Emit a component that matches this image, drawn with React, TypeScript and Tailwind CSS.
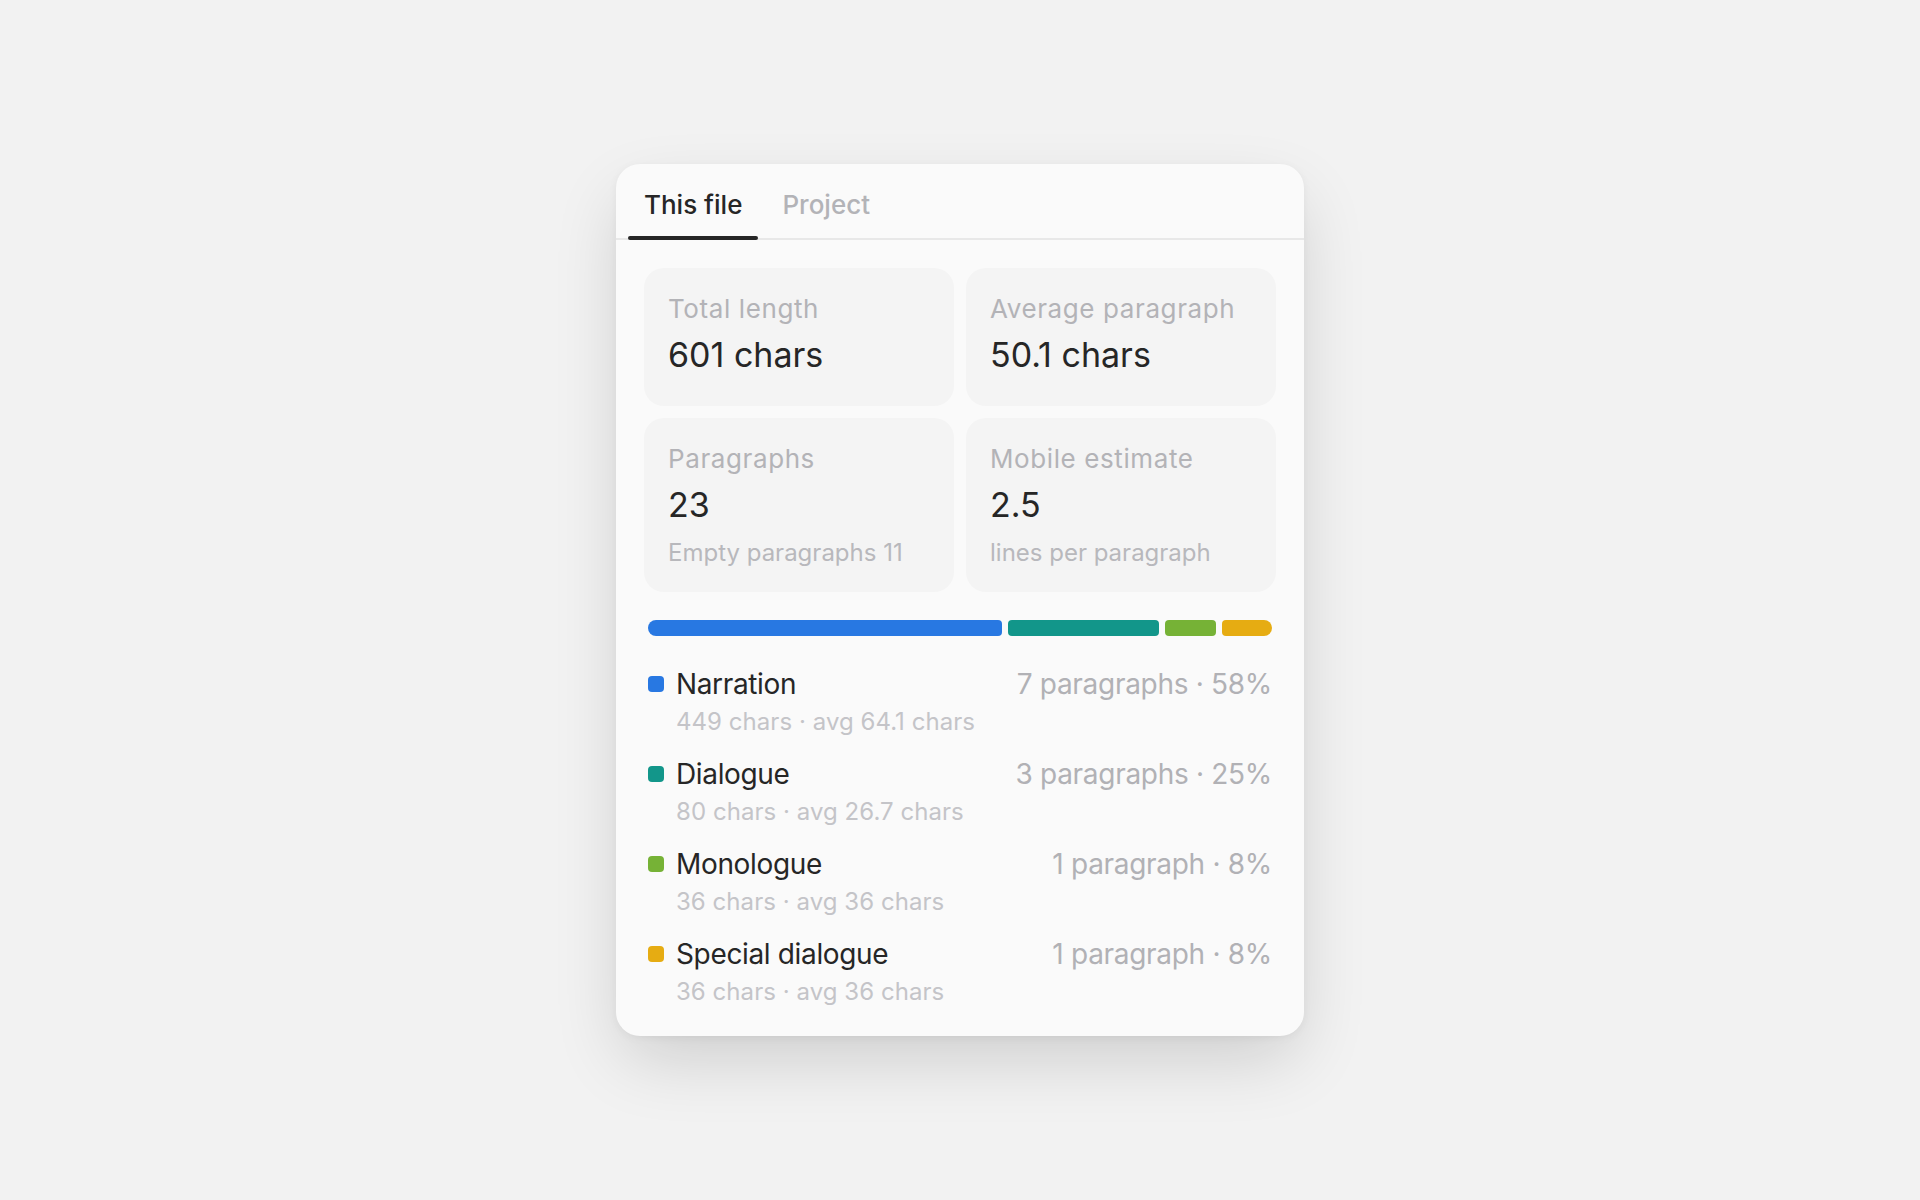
import React from "react";

const font = { fontFamily: "Inter, 'Noto Sans', 'Liberation Sans', sans-serif" };

type Stat = { label: string; value: string; sub?: string };

const stats: Stat[] = [
  { label: "Total length", value: "601 chars" },
  { label: "Average paragraph", value: "50.1 chars" },
  { label: "Paragraphs", value: "23", sub: "Empty paragraphs 11" },
  { label: "Mobile estimate", value: "2.5", sub: "lines per paragraph" },
];

type Seg = { name: string; color: string; grow: number; right: string; sub: string };

const segs: Seg[] = [
  { name: "Narration", color: "bg-[#2878e2]", grow: 7, right: "7 paragraphs · 58%", sub: "449 chars · avg 64.1 chars" },
  { name: "Dialogue", color: "bg-[#12968a]", grow: 3, right: "3 paragraphs · 25%", sub: "80 chars · avg 26.7 chars" },
  { name: "Monologue", color: "bg-[#76b236]", grow: 1, right: "1 paragraph · 8%", sub: "36 chars · avg 36 chars" },
  { name: "Special dialogue", color: "bg-[#e6ac12]", grow: 1, right: "1 paragraph · 8%", sub: "36 chars · avg 36 chars" },
];

function StatCard({ s }: { s: Stat }) {
  return (
    <div
      className={
        "flex flex-col rounded-[20px] bg-[#f4f4f4] px-6 pt-6 " + (s.sub ? "pb-[24px]" : "pb-[30px]")
      }
    >
      <div className="text-[26px] leading-[34px] tracking-[0.6px] text-[#b3b3b7]">{s.label}</div>
      <div className="mt-2 text-[34px] leading-[42px] text-[#262626]">{s.value}</div>
      {s.sub && <div className="mt-3 text-[24px] leading-[30px] text-[#b8b8bc]">{s.sub}</div>}
    </div>
  );
}

export default function App() {
  return (
    <div className="flex min-h-screen w-full items-center justify-center bg-[#f2f2f2]" style={font}>
      <div className="w-[688px] overflow-hidden rounded-[24px] bg-[#fafafa] shadow-[0_28px_70px_-8px_rgba(0,0,0,0.16),0_2px_8px_rgba(0,0,0,0.05)]">
        <div className="flex gap-2 border-b-2 border-[#e8e8e8] px-3 pt-6">
          <div className="relative px-4 pb-4">
            <span className="text-[26px] font-medium leading-[34px] text-[#262626]">This file</span>
            <div className="absolute -bottom-[2px] left-0 right-0 h-1 rounded-full bg-[#262626]" />
          </div>
          <div className="relative px-4 pb-4">
            <span className="text-[26px] font-medium leading-[34px] text-[#b3b3b7]">Project</span>
          </div>
        </div>

        <div className="px-7 pb-[30px] pt-7">
          <div className="grid grid-cols-2 gap-3">
            {stats.map((s) => (
              <StatCard key={s.label} s={s} />
            ))}
          </div>

          <div className="px-1">
            <div className="mt-7 flex h-4 gap-[6px] overflow-hidden rounded-full">
              {segs.map((g) => (
                <div
                  key={g.name}
                  className={"h-full rounded-[4px] " + g.color}
                  style={{ flexGrow: g.grow, flexBasis: 0 }}
                />
              ))}
            </div>

            <div className="mt-[30px] flex flex-col gap-5">
              {segs.map((g) => (
                <div key={g.name} className="flex items-start gap-3">
                  <div className={"mt-[10px] h-4 w-4 shrink-0 rounded-[4px] " + g.color} />
                  <div className="flex min-w-0 flex-1 flex-col">
                    <div className="flex items-baseline justify-between">
                      <span className="text-[28px] leading-[36px] tracking-[-0.35px] text-[#262626]">{g.name}</span>
                      <span className="text-[28px] leading-[36px] tracking-[-0.3px] text-[#b1b1b5]">{g.right}</span>
                    </div>
                    <div className="mt-[5px] text-[24px] leading-[29px] tracking-[0.05px] text-[#c4c4c8]">{g.sub}</div>
                  </div>
                </div>
              ))}
            </div>
          </div>
        </div>
      </div>
    </div>
  );
}
